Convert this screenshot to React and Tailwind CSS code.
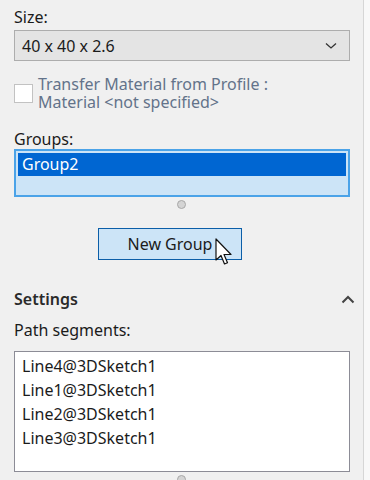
const font = { fontFamily: '"Noto Sans", "Open Sans", sans-serif' };

const segments = ["Line4@3DSketch1", "Line1@3DSketch1", "Line2@3DSketch1", "Line3@3DSketch1"];

const Grip = () => (
  <div className="flex justify-center">
    <div className="w-[9px] h-[9px] rounded-full bg-[#d4d4d4] border border-[#a8a8a8]" />
  </div>
);

const Cursor = () => (
  <svg className="absolute left-[215px] top-[238px]" width="19" height="30" viewBox="0 0 19 30">
    <path
      d="M1 1 L1 22 L6 17.5 L9.5 26 L12.5 24.8 L9 16.5 L16 16.5 Z"
      fill="#ffffff"
      stroke="#111111"
      strokeWidth="1.2"
      strokeLinejoin="round"
    />
  </svg>
);

export default function App() {
  return (
    <div
      className="relative w-[370px] h-[480px] overflow-hidden bg-[#f0f0f0] flex text-[16px] text-[#1b1b1b]"
      style={font}
    >
      <div className="w-[363px] shrink-0 flex flex-col">
        <div className="px-[14px] pt-[7px] flex flex-col">
          <div className="h-5 leading-5">Size:</div>
          <div className="mt-[3px] h-[31px] w-[336px] bg-[#e4e4e4] border border-[#adadad] flex items-center justify-between pl-[7px] pr-[12px]">
            <span>40 x 40 x 2.6</span>
            <svg width="12" height="8" viewBox="0 0 12 8">
              <path d="M1 1.5 L6 6 L11 1.5" fill="none" stroke="#333" strokeWidth="1.3" />
            </svg>
          </div>

          <div className="mt-[14px] flex items-start">
            <div className="mt-[9px] w-[19px] h-[19px] bg-white border border-[#c2c2c2] shrink-0" />
            <div className="ml-[5px] leading-[18px] text-[#63738a]">
              <div>Transfer Material from Profile :</div>
              <div>Material &lt;not specified&gt;</div>
            </div>
          </div>

          <div className="mt-[18px] h-5 leading-5">Groups:</div>
          <div className="h-[48px] w-[336px] border-2 border-[#4ba3e8] bg-[#cce4f7] p-[2px]">
            <div className="h-[23px] bg-[#0066d2] text-white leading-[23px] pl-[4px]">Group2</div>
          </div>
          <div className="mt-[3px]">
            <Grip />
          </div>

          <div className="mt-[19px] ml-[84px] w-[144px] h-[32px] bg-[#cce4f7] border border-[#0b5ea8] flex items-center justify-center">
            New Group
          </div>
        </div>

        <div className="mt-[18px] mx-[8px] h-px bg-[#a3a3a3]" />

        <div className="px-[14px] flex flex-col">
          <div className="mt-[10px] h-[22px] flex items-center justify-between">
            <span className="font-semibold text-[#2a2a2a]">Settings</span>
            <svg className="mr-[-6px]" width="14" height="9" viewBox="0 0 14 9">
              <path d="M1.5 7.5 L7 2 L12.5 7.5" fill="none" stroke="#444" strokeWidth="2" />
            </svg>
          </div>
          <div className="mt-[10px] h-5 leading-5">Path segments:</div>
          <div className="mt-[11px] h-[121px] w-[336px] bg-white border border-[#8c8c96] pl-[7px] pt-[2px]">
            {segments.map((s) => (
              <div key={s} className="leading-[24px]">
                {s}
              </div>
            ))}
          </div>
          <div className="mt-[3px]">
            <Grip />
          </div>
        </div>
      </div>
      <div className="w-px bg-[#d6d6d6]" />
      <div className="flex-1 bg-[#f8f8f8]" />
      <Cursor />
    </div>
  );
}
